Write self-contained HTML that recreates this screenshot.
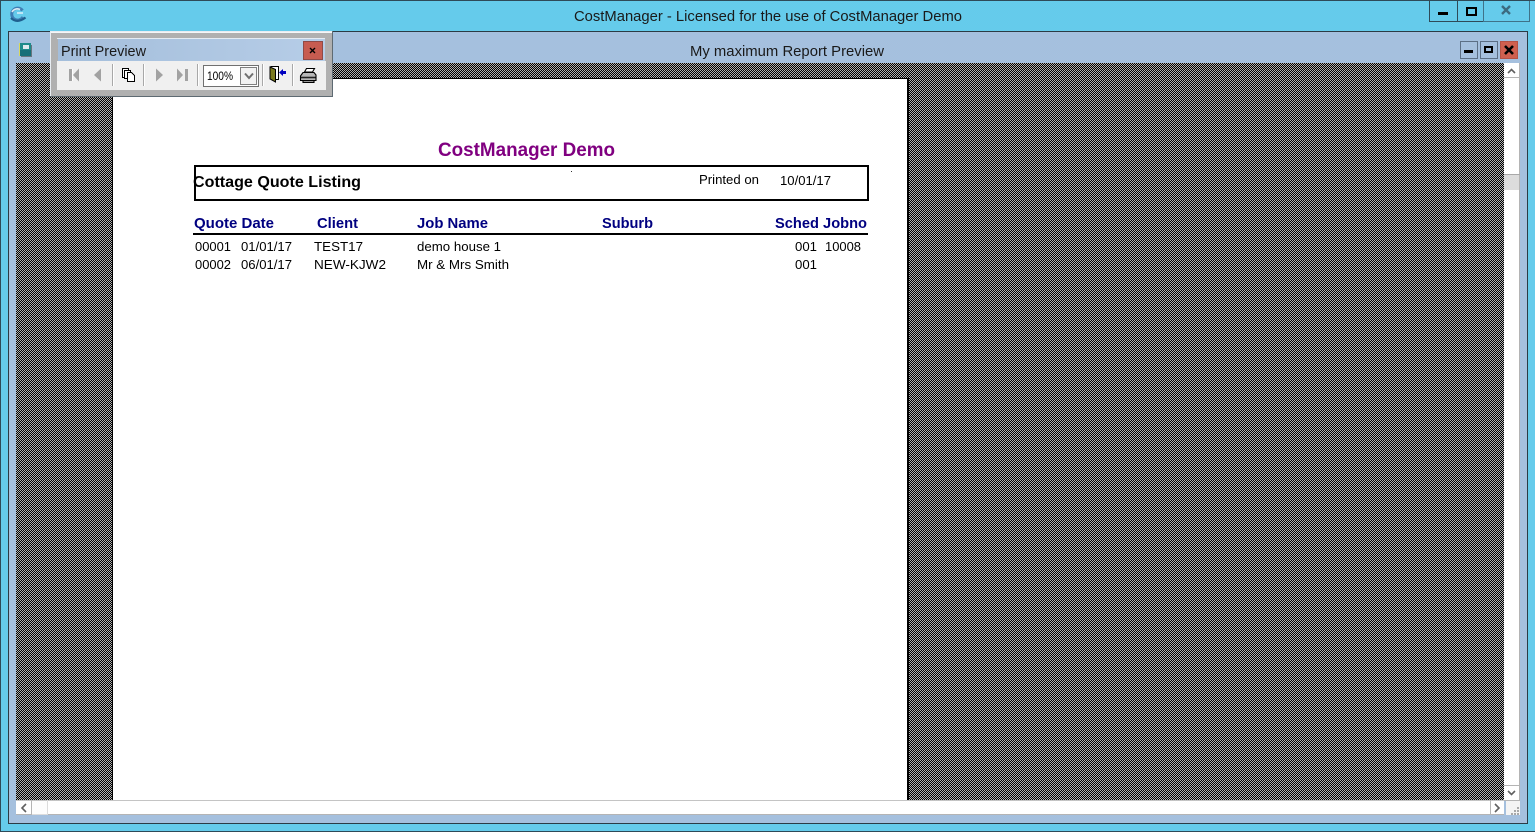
<!DOCTYPE html>
<html><head><meta charset="utf-8"><title>CostManager</title>
<style>html,body{margin:0;padding:0;background:#65cbeb;overflow:hidden;width:1535px;height:832px}
svg{display:block;position:absolute;left:0;top:0}
#chk{position:absolute;left:16px;top:63px;width:1488px;height:737px;background:conic-gradient(#b0b0b0 0 25%,#000 0 50%,#b0b0b0 0 75%,#000 0) 0 0/2px 2px}
text{font-family:"Liberation Sans",sans-serif;white-space:pre}</style></head>
<body>
<svg xmlns="http://www.w3.org/2000/svg" width="1535" height="832" viewBox="0 0 1535 832">
<g shape-rendering="crispEdges">
<rect width="1535" height="832" fill="#65cbeb"/>
<rect x="0" y="0" width="1535" height="1" fill="#2e4a58"/>
<rect x="0" y="0" width="1" height="832" fill="#2e4a58"/>
<rect x="0" y="831" width="1535" height="1" fill="#2e4a58"/>
<rect x="8" y="31" width="1520" height="793" fill="#2b3b45"/>
<rect x="9" y="32" width="1518" height="791" fill="#a5c0de"/>
</g>
</svg>
<div id="chk"></div>
<svg xmlns="http://www.w3.org/2000/svg" width="1535" height="832" viewBox="0 0 1535 832">
<defs>
<linearGradient id="tb" x1="0" x2="1" y1="0" y2="0"><stop offset="0" stop-color="#a4bedb"/><stop offset="1" stop-color="#b6cde7"/></linearGradient>
</defs>
<g shape-rendering="crispEdges">
<!-- outer caption buttons -->
<rect x="1429" y="1" width="1" height="21" fill="#2e4a58"/>
<rect x="1457" y="1" width="1" height="21" fill="#2e4a58"/>
<rect x="1429" y="21" width="54" height="1" fill="#2e4a58"/>
<rect x="1483" y="1" width="1" height="21" fill="#3f7288"/>
<rect x="1483" y="21" width="47" height="1" fill="#3f7288"/>
<rect x="1529" y="1" width="1" height="21" fill="#3f7288"/>
<rect x="1438" y="12" width="10" height="3" fill="#000"/>
<rect x="1467" y="8" width="9" height="7" fill="none" stroke="#000" stroke-width="2"/>
<!-- page -->
<rect x="112" y="78" width="797" height="722" fill="#000"/>
<rect x="113" y="79" width="794" height="721" fill="#fff"/>
<!-- v scrollbar -->
<rect x="1504" y="63" width="15" height="737" fill="#fff"/>
<rect x="1519" y="63" width="1" height="738" fill="#b4b4b4"/>
<rect x="1504" y="77" width="15" height="1" fill="#b4b4b4"/>
<rect x="1504" y="174" width="15" height="16" fill="#dcdcdc"/>
<rect x="1504" y="174" width="16" height="1" fill="#a8a8a8"/>
<rect x="1504" y="785" width="15" height="1" fill="#b4b4b4"/>
<rect x="1504" y="800" width="16" height="1" fill="#b4b4b4"/>
<!-- h scrollbar -->
<rect x="16" y="800" width="1488" height="15" fill="#fff"/>
<rect x="16" y="800" width="1488" height="1" fill="#c4c4c4"/>
<rect x="16" y="814" width="1488" height="1" fill="#b4b4b4"/>
<rect x="31" y="800" width="1" height="15" fill="#b4b4b4"/>
<rect x="32" y="801" width="16" height="14" fill="#fdfdfd"/>
<rect x="47" y="800" width="1" height="15" fill="#dcdcdc"/>
<rect x="32" y="814" width="16" height="1" fill="#dcdcdc"/>
<rect x="1490" y="800" width="1" height="15" fill="#b4b4b4"/>
<rect x="1506" y="801" width="14" height="14" fill="#f4f4f4"/>
<g fill="#a8a8a8"><rect x="1517" y="807" width="2" height="2"/><rect x="1514" y="810" width="2" height="2"/><rect x="1517" y="810" width="2" height="2"/><rect x="1511" y="813" width="2" height="2"/><rect x="1514" y="813" width="2" height="2"/><rect x="1517" y="813" width="2" height="2"/></g>
<!-- child caption buttons -->
<rect x="1460.5" y="41.5" width="17" height="17" fill="#a5c0de" stroke="#5c6f85"/>
<rect x="1480.5" y="41.5" width="17" height="17" fill="#a5c0de" stroke="#5c6f85"/>
<rect x="1500.5" y="41.5" width="17" height="17" fill="#d0604f" stroke="#b65244"/>
<rect x="1464" y="50" width="9" height="3" fill="#000"/>
<rect x="1485" y="47" width="7" height="5" fill="none" stroke="#000" stroke-width="2"/>
<!-- toolbar window -->
<rect x="50" y="31" width="283" height="66" fill="#5e6a72"/>
<rect x="50" y="31" width="282" height="65" fill="#e8edf2"/>
<rect x="51" y="32" width="281" height="64" fill="#b0b0b0"/>
<rect x="51" y="32" width="281" height="1" fill="#f4f6f8"/>
<rect x="57" y="38" width="268" height="1" fill="#e4ecf4"/>
<rect x="58" y="39" width="267" height="22" fill="url(#tb)"/>
<rect x="57" y="61" width="269" height="29" fill="#f0f0f0"/>
<rect x="303" y="41" width="20" height="19" fill="#c75c50"/>
<rect x="303" y="41" width="20" height="1" fill="#8f4a46"/>
<rect x="303" y="41" width="1" height="19" fill="#8f4a46"/>
<rect x="322" y="41" width="1" height="19" fill="#8f4a46"/>
<rect x="303" y="59" width="20" height="1" fill="#8f4a46"/>
<!-- separators -->
<g fill="#a8a8a8"><rect x="112" y="64" width="1" height="22"/><rect x="143" y="64" width="1" height="22"/><rect x="197" y="64" width="1" height="22"/><rect x="262" y="64" width="1" height="22"/><rect x="292" y="64" width="1" height="22"/></g>
<g fill="#fff"><rect x="113" y="64" width="1" height="22"/><rect x="144" y="64" width="1" height="22"/><rect x="198" y="64" width="1" height="22"/><rect x="263" y="64" width="1" height="22"/><rect x="293" y="64" width="1" height="22"/></g>
<!-- combo -->
<rect x="203.5" y="65.5" width="55" height="21" fill="#fff" stroke="#707070"/>
<rect x="240.5" y="67.5" width="16" height="17" fill="#f2f2f2" stroke="#808080"/>
<!-- dust dot -->
<rect x="571" y="171" width="1" height="1" fill="#333"/>
<!-- report box -->
<rect x="195" y="166" width="673" height="34" fill="none" stroke="#000" stroke-width="2"/>
<rect x="193" y="233" width="675" height="2" fill="#000"/>
</g>
<!-- nav icons -->
<g fill="#a2a2a2">
<rect x="69" y="69" width="3" height="12"/><path d="M79 68.5V81.5L73 75Z"/>
<path d="M101 68.5V81.5L94 75Z"/>
<path d="M156 68.5V81.5L163 75Z"/>
<path d="M177 68.5V81.5L183 75Z"/><rect x="185" y="69" width="3" height="12"/>
</g>
<g fill="#fff"><rect x="72" y="69" width="1" height="12" opacity=".9"/></g>
<!-- copy pages -->
<g fill="#fff" stroke="#000" stroke-width="1" shape-rendering="crispEdges">
<rect x="122.5" y="68.5" width="6" height="9"/>
<rect x="124.5" y="70.5" width="6" height="8"/>
<path d="M127.5 72.5H131.5L134.5 75.5V81.5H127.5Z"/>
</g>
<!-- dropdown chevron -->
<path d="M245 73.5L249 78L253 73.5" fill="none" stroke="#707070" stroke-width="2"/>
<!-- door -->
<g>
<path d="M270.5 66.5H278.5V79.5H275" fill="#fff" stroke="#000" stroke-width="1"/>
<path d="M270 67L275.5 69.5V82L270 79Z" fill="#7b7a1e" stroke="#000" stroke-width="1"/>
<path d="M279 72.5L283 69V71H286V74H283V76Z" fill="#0000c0"/>
</g>
<!-- printer -->
<g stroke="#000" stroke-width="1.1">
<path d="M304.5 72L306.5 68.5H314.5L312.5 72Z" fill="#fff"/>
<path d="M300.5 76L303 72.5H314L316 75V80.5H300.5Z" fill="#b8b8b8"/>
<path d="M303 80.5H314V82.5H303Z" fill="#999"/>
<path d="M301 77.5H315.5" fill="none" stroke="#222" stroke-width="1.6"/>
</g>
<!-- caption X -->
<path d="M1502 6L1510 14M1510 6L1502 14" stroke="#3c6b80" stroke-width="2.4" fill="none"/>
<path d="M1505 46L1513 54M1513 46L1505 54" stroke="#000" stroke-width="2.6" fill="none"/>
<path d="M310 48L315 53M315 48L310 53" stroke="#000" stroke-width="1.4" fill="none"/>
<!-- scroll arrows -->
<g fill="none" stroke="#606060" stroke-width="1.6">
<path d="M1508 73L1511.5 69.5L1515 73"/>
<path d="M1508 791L1511.5 794.5L1515 791"/>
<path d="M26 804L22 808L26 812"/>
<path d="M1495 804L1499 808L1495 812"/>
</g>
<!-- app icon -->
<g fill="none">
<path d="M22.5 10.5A6 6 0 1 0 23 17" stroke="#3f7fb5" stroke-width="3"/>
<path d="M12 12A6 6 0 0 1 20 9.5" stroke="#dcecf6" stroke-width="1.6"/>
<path d="M11 18Q17 24 25.5 17.5" stroke="#1f5f8f" stroke-width="2.2"/>
<path d="M17 13H23" stroke="#e6f3fa" stroke-width="1.4"/>
</g>
<!-- child icon -->
<g shape-rendering="crispEdges">
<rect x="21" y="45" width="11" height="12" fill="#68757d"/>
<rect x="20" y="43" width="11" height="13" fill="#1f8a8a"/>
<rect x="20" y="50" width="11" height="6" fill="#166f78"/>
<rect x="23" y="45" width="6" height="4" fill="#dfe9ee"/>
<rect x="19" y="43" width="1" height="13" fill="#d8d860"/>
</g>
<!-- text -->
<text x="574" y="21" font-size="14.5" fill="#1a1a1a" textLength="388" lengthAdjust="spacingAndGlyphs">CostManager - Licensed for the use of CostManager Demo</text>
<text x="690" y="56" font-size="14.5" fill="#1a1a1a" textLength="194" lengthAdjust="spacingAndGlyphs">My maximum Report Preview</text>
<text x="61" y="56" font-size="14.5" fill="#1a1a1a" textLength="85" lengthAdjust="spacingAndGlyphs">Print Preview</text>
<text x="207" y="80" font-size="12" fill="#000" textLength="26" lengthAdjust="spacingAndGlyphs">100%</text>
<text x="438" y="156" font-size="19" font-weight="bold" fill="#800080" textLength="177" lengthAdjust="spacingAndGlyphs">CostManager Demo</text>
<text x="193" y="187" font-size="16" font-weight="bold" fill="#000" textLength="168" lengthAdjust="spacingAndGlyphs">Cottage Quote Listing</text>
<text x="699" y="184" font-size="13" fill="#000" textLength="60" lengthAdjust="spacingAndGlyphs">Printed on</text>
<text x="780" y="185" font-size="13" fill="#000" textLength="51" lengthAdjust="spacingAndGlyphs">10/01/17</text>
<g font-size="15" font-weight="bold" fill="#000080">
<text x="194" y="228" textLength="80" lengthAdjust="spacingAndGlyphs">Quote Date</text>
<text x="317" y="228" textLength="41" lengthAdjust="spacingAndGlyphs">Client</text>
<text x="417" y="228" textLength="71" lengthAdjust="spacingAndGlyphs">Job Name</text>
<text x="602" y="228" textLength="51" lengthAdjust="spacingAndGlyphs">Suburb</text>
<text x="775" y="228" textLength="92" lengthAdjust="spacingAndGlyphs">Sched Jobno</text>
</g>
<g font-size="13" fill="#000">
<text x="195" y="251" textLength="36" lengthAdjust="spacingAndGlyphs">00001</text>
<text x="241" y="251" textLength="51" lengthAdjust="spacingAndGlyphs">01/01/17</text>
<text x="314" y="251" textLength="49" lengthAdjust="spacingAndGlyphs">TEST17</text>
<text x="417" y="251" textLength="84" lengthAdjust="spacingAndGlyphs">demo house 1</text>
<text x="795" y="251" textLength="22" lengthAdjust="spacingAndGlyphs">001</text>
<text x="825" y="251" textLength="36" lengthAdjust="spacingAndGlyphs">10008</text>
<text x="195" y="269" textLength="36" lengthAdjust="spacingAndGlyphs">00002</text>
<text x="241" y="269" textLength="51" lengthAdjust="spacingAndGlyphs">06/01/17</text>
<text x="314" y="269" textLength="72" lengthAdjust="spacingAndGlyphs">NEW-KJW2</text>
<text x="417" y="269" textLength="92" lengthAdjust="spacingAndGlyphs">Mr &amp; Mrs Smith</text>
<text x="795" y="269" textLength="22" lengthAdjust="spacingAndGlyphs">001</text>
</g>
</svg>
</body></html>
